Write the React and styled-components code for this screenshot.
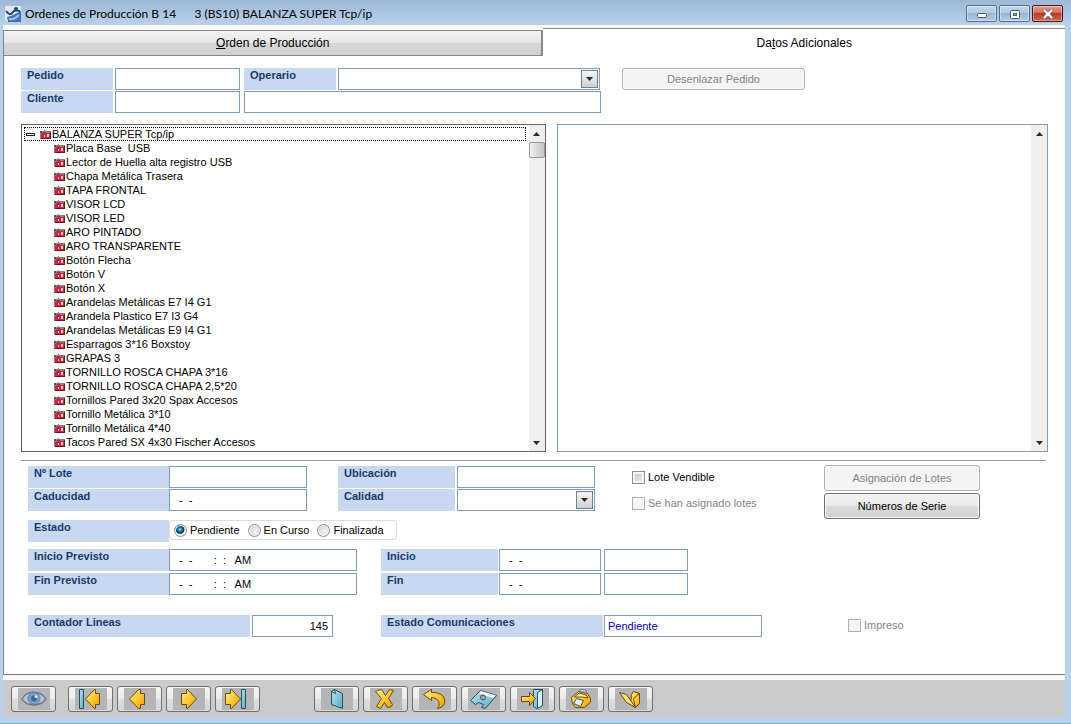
import React from 'react'
import styled, { createGlobalStyle, css } from 'styled-components'

const PARTS = [
    'Placa Base  USB',
    'Lector de Huella alta registro USB',
    'Chapa Metálica Trasera',
    'TAPA FRONTAL',
    'VISOR LCD',
    'VISOR LED',
    'ARO PINTADO',
    'ARO TRANSPARENTE',
    'Botón Flecha',
    'Botón V',
    'Botón X',
    'Arandelas Metálicas E7 I4 G1',
    'Arandela Plastico E7 I3 G4',
    'Arandelas Metálicas E9 I4 G1',
    'Esparragos 3*16 Boxstoy',
    'GRAPAS 3',
    'TORNILLO ROSCA CHAPA 3*16',
    'TORNILLO ROSCA CHAPA 2,5*20',
    'Tornillos Pared 3x20 Spax Accesos',
    'Tornillo Metálica 3*10',
    'Tornillo Metálica 4*40',
    'Tacos Pared SX 4x30 Fischer Accesos'
]

const DATE = '-  -'
const DATETIME = '-  -       :  :   AM'

function AppIcon() {
    return (
        <svg width="16" height="16" viewBox="0 0 16 16" aria-hidden="true">
            <path d="M0 0H16V16H2L0 13Z" fill="#dfe9f4" />
            <path d="M2 11L6 10L10 8L16 5V16H3Z" fill="#3f74ae" />
            <path d="M1 5C4 9 6 9 8 6S12 5 15 5" fill="none" stroke="#1d3f66" strokeWidth="2" />
            <circle cx="11" cy="3" r="2" fill="#26486b" />
            <path d="M4 13C8 14 11 12 14 9" fill="none" stroke="#9fc6ec" strokeWidth="2" />
        </svg>
    )
}

function Folder() {
    return (
        <FolderSvg width="11" height="9" viewBox="0 0 11 9" shapeRendering="crispEdges" aria-hidden="true">
            <path d="M0 1H4V0H5V1H11V9H0Z" fill="#8a8078" />
            <path d="M2 3H10V8H1V4Z" fill="#d8203c" />
            <path d="M0 1H2V3H0ZM3 2H6V3H3Z" fill="#4c5850" />
            <path d="M7 4H9V7H7ZM4 5H5V7H4Z" fill="#f3d3d3" />
            <path d="M10 2H11V9H1V8H10Z" fill="#5a2026" />
        </FolderSvg>
    )
}

function Arrow({ up }) {
    return (
        <svg width="7" height="4" viewBox="0 0 7 4" aria-hidden="true">
            <path d={up ? 'M0 4L3.5 0L7 4Z' : 'M0 0L3.5 4L7 0Z'} fill="#2a2a2a" />
        </svg>
    )
}

const gold = { fill: 'url(#gold)', stroke: '#6b4a08', strokeWidth: 1, strokeLinejoin: 'round' }
const ice = { fill: 'url(#ice)', stroke: '#24505f', strokeWidth: 1, strokeLinejoin: 'round' }

const ICONS = {
    eye: (
        <g>
            <path d="M4 11C9 2 22 2 28 11C22 19 9 19 4 11Z" fill="#b9c4d2" stroke="#66788f" strokeWidth="1.4" />
            <circle cx="16" cy="10.5" r="6" fill="#7d9fc8" stroke="#5b7fab" />
            <circle cx="16" cy="10.5" r="3" fill="#3f6597" />
            <circle cx="18" cy="8.5" r="1.5" fill="#dbe9f7" />
        </g>
    ),
    first: (
        <g>
            <rect x="4.5" y="1.5" width="4" height="19" {...ice} />
            <path d="M10.5 11L19.5 1.5H20.5V5.5H24.5V16.5H20.5V20.5H19.5Z" {...gold} />
        </g>
    ),
    prev: <path d="M5.500 11L14.500 1.500H16.500V5.500H20.500V16.500H16.500V20.500H14.500Z" {...gold} />,
    next: <path d="M23.500 11L14.500 1.500H13.500V5.500H8.500V16.500H13.500V20.500H14.500Z" {...gold} />,
    last: (
        <g>
            <rect x="19.5" y="1.5" width="4" height="19" {...ice} />
            <path d="M18.5 11L9.5 1.500H8.500V5.500H3.500V16.500H8.500V20.500H9.500Z" {...gold} />
        </g>
    ),
    sheet: (
        <g>
            <path d="M10.5 3.5L13.5 1.5L21.5 5.5V20.5L10.5 16.5Z" {...ice} />
            <path d="M10.5 3.5L14.5 5.5L13.5 1.5Z" fill="#dff4fa" stroke="#24505f" />
        </g>
    ),
    cross: (
        <path
            d="M5.500 3.500L7.500 2.500L11.500 1.500L15.500 7.500L19.500 1.500L23.500 2.500L18.500 10.500L22.500 16.500L21.500 18.500L17.500 19.500L14.500 14.500L10.500 20.500L6.500 18.500L11.500 10.500Z"
            {...gold}
        />
    ),
    undo: (
        <path
            d="M4.500 6.500L12.500 1.500V4.500C22 4 27 9 25.500 15.500C24 19 21 20 18.500 20.500C22 16 20 10 12.500 9.500V12.500Z"
            {...gold}
        />
    ),
    disk: (
        <g>
            <path d="M2.500 12.500L12.500 2.500L28.500 7.500L17.500 20.500L13.500 19.500L15.500 16.500L10.500 14.500L7.500 16.500Z" {...ice} />
            <path d="M13 3L28 7.500L25 10L11 5.500Z" fill="#eefafd" />
            <circle cx="15" cy="9.500" r="2.500" fill="#a2a8ac" stroke="#3a4f5a" />
        </g>
    ),
    exit: (
        <g>
            <path d="M16.500 1.500H25.500V17.500L19.500 20.500L16.500 18.500Z" {...ice} />
            <path d="M20.500 4.500L25.500 1.500V17.500L20.500 20.500Z" fill="#d9f2f8" stroke="#24505f" />
            <path d="M18.500 10.500L12.500 4.500V8.500H4.500V13.500H12.500V17.500Z" {...gold} />
        </g>
    ),
    print: (
        <g>
            <path d="M14 1L20 2L21 8L14 6Z" fill="#b4c6ee" stroke="#7b87a8" />
            <path d="M5.500 9.500L12.500 3.500L21.500 5.500L24.500 10.500V14.500L18.500 19.500H9.500L6.500 15.500Z" {...gold} />
            <path d="M8.500 9L13 5L20 7L22 10L16 9Z" fill="#fff0ad" stroke="#6b4a08" />
            <path d="M10.500 10.500L17.500 12.500L14.500 18.500L7.500 15.500Z" fill="#dff0fa" stroke="#38586c" />
        </g>
    ),
    folder: (
        <g>
            <path d="M16.500 6.500L18.500 3.500L24.500 5.500V15.500L20.500 19.500L15.500 15.500Z" {...gold} />
            <path d="M4.500 4.500L11.500 6.500L20.500 19.500L11.500 14.500Z" fill="#ffe07a" stroke="#6b4a08" />
            <path d="M18.500 10.500L24.500 5.500V15.500L20.500 19.500Z" {...gold} />
        </g>
    )
}

function Tool({ icon, label }) {
    return (
        <ToolButton type="button" aria-label={label}>
            <ToolFace>
                <svg width="32" height="22" viewBox="0 0 32 22" aria-hidden="true">
                    {ICONS[icon]}
                </svg>
            </ToolFace>
        </ToolButton>
    )
}

function ScrollBar({ thumb }) {
    return (
        <ScrollTrack>
            <ScrollButton type="button" aria-label="Subir"><Arrow up /></ScrollButton>
            {thumb && <Thumb />}
            <Spacer />
            <ScrollButton type="button" aria-label="Bajar"><Arrow /></ScrollButton>
        </ScrollTrack>
    )
}

function Combo({ id, w }) {
    return (
        <ComboWrap w={w}>
            <Select id={id} defaultValue=""><option value=""></option></Select>
            <ComboArrow><Arrow /></ComboArrow>
        </ComboWrap>
    )
}

function App() {
    return (
        <Window>
            <GlobalStyle />
            <Gradients width="0" height="0" aria-hidden="true">
                <defs>
                    <linearGradient id="gold" x1="0" y1="0" x2="1" y2="1">
                        <stop offset="0" stopColor="#fff0a0" />
                        <stop offset="0.5" stopColor="#ffc832" />
                        <stop offset="1" stopColor="#ee9c00" />
                    </linearGradient>
                    <linearGradient id="ice" x1="0" y1="0" x2="1" y2="1">
                        <stop offset="0" stopColor="#b4e2f0" />
                        <stop offset="1" stopColor="#5fabc4" />
                    </linearGradient>
                </defs>
            </Gradients>

            <TitleBar>
                <AppIcon />
                <Title>{'Ordenes de Producción B 14      3 (BS10) BALANZA SUPER Tcp/ip'}</Title>
                <Caption type="button" aria-label="Minimizar">
                    <svg width="12" height="10" viewBox="0 0 12 10">
                        <rect x="1.5" y="4.5" width="9" height="4" rx="1" fill="#fff" stroke="#4a5a70" />
                    </svg>
                </Caption>
                <Caption type="button" aria-label="Restaurar">
                    <svg width="12" height="10" viewBox="0 0 12 10">
                        <rect x="1.5" y="1.5" width="9" height="8" rx="1" fill="#fff" stroke="#4a5a70" />
                        <rect x="4.5" y="4.5" width="3" height="2" fill="#a9bdd4" stroke="#4a5a70" />
                    </svg>
                </Caption>
                <Caption type="button" aria-label="Cerrar" close>
                    <svg width="14" height="10" viewBox="0 0 14 10">
                        <path d="M3 1L11 9M11 1L3 9" stroke="#5b3038" strokeWidth="4" />
                        <path d="M3 1L11 9M11 1L3 9" stroke="#fff" strokeWidth="2.5" />
                    </svg>
                </Caption>
            </TitleBar>

            <Body>
                <Tabs role="tablist">
                    <Tab type="button" role="tab" aria-selected="false"><span><u>O</u>rden de Producción</span></Tab>
                    <Tab type="button" role="tab" aria-selected="true" active><span>Da<u>t</u>os Adicionales</span></Tab>
                </Tabs>

                <Panel>
                    <Head>
                        <Stack gap={1}>
                            <Row>
                                <Label htmlFor="pedido" w={92}>Pedido</Label>
                                <Input id="pedido" w={125} />
                            </Row>
                            <Row>
                                <Label htmlFor="cliente" w={92}>Cliente</Label>
                                <Input id="cliente" w={125} />
                            </Row>
                        </Stack>
                        <Stack gap={1}>
                            <Row>
                                <Label htmlFor="operario" w={92}>Operario</Label>
                                <Combo id="operario" w={262} />
                            </Row>
                            <Input aria-label="Nombre del cliente" w={357} />
                        </Stack>
                        <HeadAction>
                            <Button type="button" w={183} h={22} disabled>Desenlazar Pedido</Button>
                        </HeadAction>
                    </Head>

                    <Lists>
                        <TreeBox>
                            <Tree>
                                <li>
                                    <Root><Minus /><Folder />BALANZA SUPER Tcp/ip</Root>
                                    <Branch>
                                        {PARTS.map(part => (
                                            <Leaf key={part}><Folder />{part}</Leaf>
                                        ))}
                                    </Branch>
                                </li>
                            </Tree>
                            <ScrollBar thumb />
                        </TreeBox>
                        <EmptyBox>
                            <Spacer />
                            <ScrollBar />
                        </EmptyBox>
                    </Lists>

                    <Rule />

                    <Form>
                        <Lot>
                            <Fields>
                                <Row gap={0}>
                                    <Label htmlFor="lote" w={141}>Nº Lote</Label>
                                    <Input id="lote" w={138} />
                                </Row>
                                <Row gap={0}>
                                    <Label htmlFor="caducidad" w={141}>Caducidad</Label>
                                    <Input id="caducidad" w={138} mask defaultValue={DATE} />
                                </Row>
                            </Fields>
                            <Fields>
                                <Row>
                                    <Label htmlFor="ubicacion" w={117}>Ubicación</Label>
                                    <Input id="ubicacion" w={138} />
                                </Row>
                                <Row>
                                    <Label htmlFor="calidad" w={117}>Calidad</Label>
                                    <Combo id="calidad" w={138} />
                                </Row>
                            </Fields>
                            <Checks>
                                <Check><CheckBox type="checkbox" />Lote Vendible</Check>
                                <Check off><CheckBox type="checkbox" disabled />Se han asignado lotes</Check>
                            </Checks>
                            <Stack gap={2}>
                                <Button type="button" w={156} h={26} disabled>Asignación de Lotes</Button>
                                <Button type="button" w={156} h={26}>Números de Serie</Button>
                            </Stack>
                        </Lot>

                        <Row gap={0}>
                            <Label as="span" id="estado" w={141}>Estado</Label>
                            <Radios role="radiogroup" aria-labelledby="estado">
                                <Check><Radio type="radio" name="estado" defaultChecked />Pendiente</Check>
                                <Check><Radio type="radio" name="estado" />En Curso</Check>
                                <Check><Radio type="radio" name="estado" />Finalizada</Check>
                            </Radios>
                        </Row>

                        <Dates>
                            <Stack gap={2}>
                                <Row gap={0}>
                                    <Label htmlFor="iniprev" w={141}>Inicio Previsto</Label>
                                    <Input id="iniprev" w={188} mask defaultValue={DATETIME} />
                                </Row>
                                <Row gap={0}>
                                    <Label htmlFor="finprev" w={141}>Fin Previsto</Label>
                                    <Input id="finprev" w={188} mask defaultValue={DATETIME} />
                                </Row>
                            </Stack>
                            <Stack gap={2}>
                                <Row gap={1}>
                                    <Label htmlFor="inicio" w={117}>Inicio</Label>
                                    <Input id="inicio" w={102} mask defaultValue={DATE} />
                                    <Spread><Input aria-label="Hora de inicio" w={84} /></Spread>
                                </Row>
                                <Row gap={1}>
                                    <Label htmlFor="fin" w={117}>Fin</Label>
                                    <Input id="fin" w={102} mask defaultValue={DATE} />
                                    <Spread><Input aria-label="Hora de fin" w={84} /></Spread>
                                </Row>
                            </Stack>
                        </Dates>

                        <Status>
                            <Row>
                                <Label htmlFor="contador" w={222}>Contador Lineas</Label>
                                <Input id="contador" w={81} right defaultValue="145" />
                            </Row>
                            <Row gap={1}>
                                <Label htmlFor="comunicaciones" w={222}>Estado Comunicaciones</Label>
                                <Input id="comunicaciones" w={158} blue defaultValue="Pendiente" />
                            </Row>
                            <Printed>
                                <Check off><CheckBox type="checkbox" disabled />Impreso</Check>
                            </Printed>
                        </Status>
                    </Form>
                </Panel>

                <ToolBar>
                    <Tool icon="eye" label="Ver" />
                    <ToolGroup>
                        <Tool icon="first" label="Primero" />
                        <Tool icon="prev" label="Anterior" />
                        <Tool icon="next" label="Siguiente" />
                        <Tool icon="last" label="Último" />
                    </ToolGroup>
                    <ToolGroup wide>
                        <Tool icon="sheet" label="Nuevo" />
                        <Tool icon="cross" label="Eliminar" />
                        <Tool icon="undo" label="Deshacer" />
                        <Tool icon="disk" label="Guardar" />
                        <Tool icon="exit" label="Salir" />
                        <Tool icon="print" label="Imprimir" />
                        <Tool icon="folder" label="Abrir" />
                    </ToolGroup>
                </ToolBar>
            </Body>
        </Window>
    )
}

export default App

const GlobalStyle = createGlobalStyle`
    * {
        box-sizing: border-box;
    }
    body {
        margin: 0;
        font-family: "Liberation Sans", Arial, sans-serif;
        font-size: 11px;
        color: #000;
    }
    button, input, select {
        font: inherit;
        margin: 0;
    }
`

const Gradients = styled.svg`
    position: absolute;
`

const Window = styled.div`
    min-height: 100vh;
    display: flex;
    flex-direction: column;
    padding: 0 6px 6px 3px;
    background: linear-gradient(#9db8d6, #b9d1ea 25px, #b9d1ea);
    border-bottom: 1px solid #4fc3dc;
`

const TitleBar = styled.header`
    height: 25px;
    display: flex;
    align-items: center;
    gap: 2px;
    padding: 2px 2px 0 2px;
`

const Title = styled.h1`
    flex: 1;
    margin: 0 0 0 2px;
    font: 12px Lato, "Open Sans", sans-serif;
    white-space: pre;
`

const Caption = styled.button.withConfig({ shouldForwardProp: p => p !== 'close' })`
    width: 31px;
    height: 17px;
    padding: 0;
    display: flex;
    align-items: center;
    justify-content: center;
    border: 1px solid ${props => props.close ? '#4c1220' : '#56708f'};
    border-radius: 2px;
    box-shadow: inset 0 0 0 1px rgba(255,255,255,0.4);
    background: ${props => props.close
        ? 'linear-gradient(#e0a093, #cf6a58 48%, #b93a27 50%, #d06a50)'
        : 'linear-gradient(#c4d6ea, #b0c8e2 48%, #98b4d3 50%, #b4cce6)'};
`

const Body = styled.main`
    flex: 1;
    display: flex;
    flex-direction: column;
    background: #fbfbf9;
    padding-top: 3px;
`

const Tabs = styled.div`
    display: flex;
    align-items: flex-end;
    background: #fff;
`

const Tab = styled.button.withConfig({ shouldForwardProp: p => p !== 'active' })`
    flex: 539 1 0;
    height: 26px;
    padding: 0;
    font-size: 12px;
    color: #000;
    border: 1px solid #85858a;
    border-right-width: 2px;
    background: linear-gradient(#f4f4f4, #e6e6e6 48%, #d6d6d6 52%, #d2d2d2);
    ${props => props.active && css`
        flex: 523 1 0;
        height: 28px;
        border-width: 1px 0 0 0;
        background: #fff;
    `}
`

const Panel = styled.section`
    flex: 1;
    padding: 12px 17px;
    background: #fff;
    border-left: 1px solid #85858a;
    border-bottom: 1px solid #77777a;
`

const Row = styled.div`
    display: flex;
    gap: ${props => props.gap ?? 2}px;
`

const Stack = styled.div`
    display: flex;
    flex-direction: column;
    gap: ${props => props.gap}px;
`

const Head = styled.div`
    display: flex;
    gap: 4px;
`

const HeadAction = styled.div`
    padding-left: 17px;
`

const Label = styled.label`
    width: ${props => props.w}px;
    height: 22px;
    padding: 1px 6px;
    font-weight: bold;
    line-height: 13px;
    color: #173a6b;
    background: #c9d8f1;
    white-space: nowrap;
`

const Input = styled.input.withConfig({ shouldForwardProp: p => !['w', 'mask', 'right', 'blue'].includes(p) })`
    width: ${props => props.w}px;
    height: 22px;
    padding: 0 4px 1px ${props => props.mask ? 9 : 3}px;
    border: 1px solid #7f9db9;
    background: #fff;
    outline: none;
    text-align: ${props => props.right ? 'right' : 'left'};
    color: ${props => props.blue ? '#0000a8' : '#000'};
`

const ComboWrap = styled.div`
    position: relative;
    width: ${props => props.w}px;
    height: 22px;
`

const Select = styled.select`
    appearance: none;
    width: 100%;
    height: 22px;
    border: 1px solid #7f9db9;
    background: #fff;
`

const ComboArrow = styled.span`
    position: absolute;
    top: 2px;
    right: 2px;
    width: 17px;
    height: 18px;
    display: flex;
    align-items: center;
    justify-content: center;
    border: 1px solid #6a7f98;
    background: linear-gradient(#f4f4f4, #d0d0d0);
    pointer-events: none;
`

const Button = styled.button`
    width: ${props => props.w}px;
    height: ${props => props.h}px;
    padding: 0;
    color: #000;
    border: 1px solid #707070;
    border-radius: 3px;
    box-shadow: inset 0 0 0 1px #fafafa;
    background: linear-gradient(#f2f2f2, #ebebeb 48%, #dddddd 50%, #cfcfcf);
    &:disabled {
        color: #838383;
        border-color: #adb2b5;
        background: #f4f4f4;
    }
`

const Lists = styled.div`
    display: flex;
    gap: 11px;
    margin-top: 11px;
`

const TreeBox = styled.div`
    flex: 525 1 0;
    display: flex;
    border: 1px solid #646464;
    background: #fff;
`

const EmptyBox = styled.div`
    flex: 491 1 0;
    display: flex;
    border: 1px solid #7f9db9;
    background: #fff;
`

const Tree = styled.ul`
    flex: 1;
    margin: 0;
    padding: 2px 3px 2px 2px;
    list-style: none;
    line-height: 14px;
    white-space: pre;
`

const Root = styled.div`
    height: 14px;
    display: flex;
    align-items: center;
    outline: 1px dotted #000;
    outline-offset: -1px;
`

const Minus = styled.span`
    width: 9px;
    height: 3px;
    margin: 0 5px 0 2px;
    border: 1px solid #222;
`

const Branch = styled.ul`
    margin: 0;
    padding: 0 0 0 30px;
    list-style: none;
`

const Leaf = styled.li`
    height: 14px;
    display: flex;
    align-items: center;
`

const FolderSvg = styled.svg`
    flex: none;
    margin-right: 1px;
`

const ScrollTrack = styled.div`
    width: 16px;
    display: flex;
    flex-direction: column;
    background: #efefef;
`

const ScrollButton = styled.button`
    height: 17px;
    padding: 0;
    display: flex;
    align-items: center;
    justify-content: center;
    border: 0;
    background: none;
`

const Thumb = styled.div`
    height: 16px;
    border: 1px solid #979797;
    border-radius: 2px;
    background: linear-gradient(90deg, #f2f2f2, #d4d4d8 60%, #c6c6ca);
`

const Spacer = styled.div`
    flex: 1;
`

const Rule = styled.hr`
    height: 1px;
    margin: 8px 2px 4px 0;
    border: 0;
    background: #9a9a9a;
`

const Form = styled.form`
    padding-left: 7px;
`

const Lot = styled.div`
    display: flex;
    margin-bottom: 1px;
`

const Fields = styled.div`
    display: flex;
    flex-direction: column;
    gap: 1px;
    padding-top: 1px;
    margin-right: 31px;
`

const Checks = styled.div`
    width: 198px;
    padding: 4px 0 0 6px;
    display: flex;
    flex-direction: column;
    gap: 10px;
`

const Check = styled.label.withConfig({ shouldForwardProp: p => p !== 'off' })`
    height: 16px;
    display: flex;
    align-items: center;
    gap: 3px;
    white-space: nowrap;
    color: ${props => props.off ? '#838383' : '#000'};
`

const CheckBox = styled.input`
    appearance: none;
    width: 13px;
    height: 13px;
    border: 1px solid #8e8f8f;
    background: linear-gradient(135deg, #b8bdc5, #f6f6f6);
    box-shadow: inset 0 0 0 2px #f4f4f4;
    &:disabled {
        border-color: #b1b1b1;
        background: #f6f6f6;
    }
`

const Radios = styled.div`
    width: 228px;
    height: 20px;
    padding: 0 4px;
    display: flex;
    align-items: center;
    gap: 8px;
    border: 1px solid #dcdcdc;
    border-radius: 3px;
`

const Radio = styled.input`
    appearance: none;
    width: 13px;
    height: 13px;
    border: 1px solid #8e8f8f;
    border-radius: 50%;
    background: radial-gradient(circle at 60% 60%, #f4f4f4, #c2c6cc);
    box-shadow: inset 0 0 0 1px #f4f4f4;
    &:checked {
        background: radial-gradient(circle at 45% 40%, #8fe0f5 0, #1d7f9e 2px, #0d3349 4px, #f0f0f0 5px);
    }
`

const Dates = styled.div`
    display: flex;
    gap: 24px;
    margin-top: 7px;
`

const Spread = styled.div`
    padding-left: 2px;
`

const Status = styled.div`
    display: flex;
    gap: 48px;
    margin-top: 20px;
`

const Printed = styled.div`
    padding: 2px 0 0 38px;
`

const ToolBar = styled.footer`
    display: flex;
    margin-top: 5px;
    padding: 6px 8px 5px;
    background: #cbcbcb;
`

const ToolGroup = styled.div.withConfig({ shouldForwardProp: p => p !== 'wide' })`
    display: flex;
    gap: 4px;
    margin-left: ${props => props.wide ? 54 : 12}px;
`

const ToolButton = styled.button`
    width: 45px;
    height: 26px;
    padding: 0;
    display: flex;
    align-items: center;
    justify-content: center;
    border: 1px solid #707070;
    border-radius: 3px;
    background: linear-gradient(#f4f4f4, #ebebeb 48%, #dedede 50%, #d6d6d6);
`

const ToolFace = styled.span`
    height: 22px;
    background: #b5b5b5;
`
